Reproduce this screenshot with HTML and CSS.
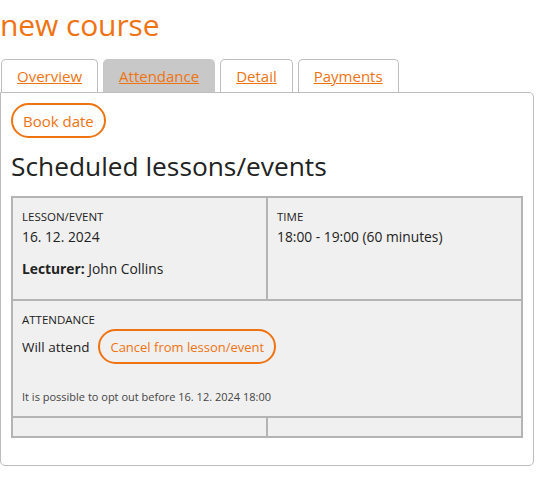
FILE: index.html
```html
<!DOCTYPE html>
<html lang="en">
<head>
<meta charset="utf-8">
<title>new course</title>
<link rel="stylesheet" href="styles.css">
</head>
<body>
<h1 class="title">new course</h1>
<nav class="tabs">
  <a class="tab" href="#">Overview</a>
  <a class="tab active" href="#">Attendance</a>
  <a class="tab" href="#">Detail</a>
  <a class="tab" href="#">Payments</a>
</nav>
<section class="panel">
  <button class="pill book">Book date</button>
  <h2 class="heading">Scheduled lessons/events</h2>
  <table class="lessons">
    <tr>
      <td class="cell first">
        <div class="label">LESSON/EVENT</div>
        <div class="value">16. 12. 2024</div>
        <div class="lecturer"><b>Lecturer:</b> John Collins</div>
      </td>
      <td class="cell first">
        <div class="label">TIME</div>
        <div class="value">18:00 - 19:00 (60 minutes)</div>
      </td>
    </tr>
    <tr>
      <td class="cell second" colspan="2">
        <div class="label">ATTENDANCE</div>
        <div class="attend-row"><span class="attend">Will attend</span><button class="pill cancel">Cancel from lesson/event</button></div>
        <div class="note">It is possible to opt out before 16. 12. 2024 18:00</div>
      </td>
    </tr>
    <tr>
      <td class="cell empty"></td>
      <td class="cell empty"></td>
    </tr>
  </table>
</section>
</body>
</html>
```
FILE: styles.css
```css
body {
  margin: 0;
  font-family: "Open Sans", "Noto Sans", sans-serif;
  color: #222;
  background: #fff;
}
.title {
  margin: 0;
  padding-top: 7px;
  font-size: 30px;
  line-height: 36px;
  font-weight: 400;
  color: #f07311;
  letter-spacing: -0.1px;
}
.tabs {
  display: flex;
  gap: 5px;
  margin-top: 16px;
  padding-left: 1px;
}
.tab {
  display: block;
  height: 32px;
  line-height: 33px;
  padding: 0 15px;
  border: 1px solid #bdbdbd;
  border-bottom: none;
  border-radius: 5px 5px 0 0;
  font-size: 15px;
  color: #f07311;
  text-decoration: underline;
  background: #fff;
}
.tab.active {
  background: #c8c8c8;
  border-color: #c8c8c8;
}
.panel {
  width: 512px;
  padding: 10px;
  padding-bottom: 27px;
  border: 1px solid #bdbdbd;
  border-radius: 0 5px 5px 5px;
}
.pill {
  font-family: inherit;
  background: transparent;
  color: #f07311;
  border: 2px solid #f07311;
  border-radius: 20px;
  cursor: pointer;
}
.book {
  display: block;
  height: 35px;
  padding: 0 10px;
  font-size: 15px;
}
.heading {
  margin: 11px 0 13px;
  font-size: 26.3px;
  line-height: 34px;
  font-weight: 400;
  color: #222;
}
.lessons {
  width: 100%;
  border-collapse: separate;
  border-spacing: 0;
  border: 1px solid #b4b4b4;
  table-layout: fixed;
}
.cell {
  background: #f0f0f0;
  border: 1px solid #b4b4b4;
  padding: 10px 9px;
  vertical-align: top;
}
.cell.first {
  padding-top: 11px;
}
.cell.second {
  padding-top: 11px;
}
.label {
  font-size: 11.5px;
  line-height: 16px;
  color: #222;
}
.value {
  font-size: 13.8px;
  line-height: 24px;
}
.lecturer {
  font-size: 13.8px;
  line-height: 22px;
  margin-top: 9px;
  margin-bottom: 9px;
}
.attend-row {
  display: flex;
  align-items: center;
  gap: 9px;
  margin-top: 1px;
}
.attend {
  font-size: 13.5px;
}
.cancel {
  height: 35px;
  padding: 0 10px;
  font-size: 13px;
}
.note {
  margin-top: 25px;
  margin-bottom: 1px;
  font-size: 11px;
  line-height: 16px;
  color: #444;
}
.empty {
  height: 0;
  padding: 9px 9px;
}
```
